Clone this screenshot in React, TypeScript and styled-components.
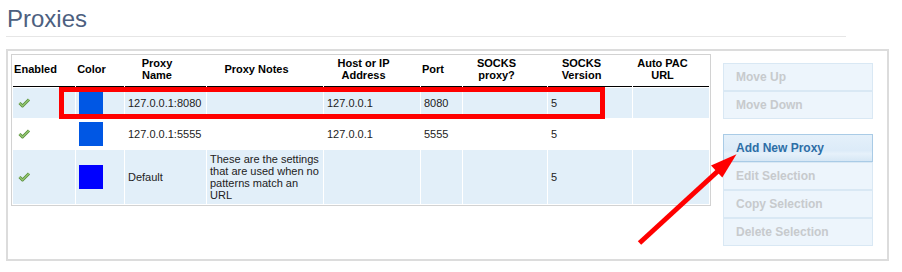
import React from "react";
import styled, { createGlobalStyle } from "styled-components";

const GlobalStyle = createGlobalStyle`
  body {
    margin: 0;
    background: #ffffff;
    font-family: "Liberation Sans", Arial, sans-serif;
  }
`;

const Page = styled.div`
  position: relative;
  padding-left: 6px;
`;

const Title = styled.h1`
  width: 840px;
  margin: 0 0 12px;
  padding: 5px 0 3px 1px;
  box-sizing: border-box;
  font-size: 24px;
  line-height: 28px;
  font-weight: normal;
  color: #4d5f80;
  border-bottom: 1px solid #e6e6e6;
`;

const Panel = styled.div`
  position: relative;
  display: flex;
  align-items: flex-start;
  width: 883px;
  height: 212px;
  box-sizing: border-box;
  padding: 3px;
  border: 2px solid #dcdcdc;
`;

const ProxyTable = styled.table`
  width: 700px;
  table-layout: fixed;
  border: 1px solid #d2d2d2;
  border-collapse: separate;
  border-spacing: 1px;
  font-size: 11px;
  line-height: 12px;
  color: #222;
`;

const HeadCell = styled.th<{ $w: number }>`
  width: ${(p) => p.$w}px;
  box-sizing: border-box;
  padding: 1px 17px 5px 0;
  text-align: center;
  vertical-align: middle;
  font-weight: bold;
  color: #000;
  border-bottom: 1px solid #000;
`;

const Row = styled.tr<{ $shaded?: boolean }>`
  background: ${(p) => (p.$shaded ? "#e2eff9" : "#ffffff")};
`;

const Cell = styled.td`
  padding: 3px;
  vertical-align: middle;
  text-align: left;
  overflow: hidden;
`;

const Swatch = styled.div<{ $color: string }>`
  width: 24px;
  height: 24px;
  background: ${(p) => p.$color};
`;

const Tick = styled.svg`
  display: block;
  margin-left: 2px;
`;

const ButtonColumn = styled.div`
  display: flex;
  flex-direction: column;
  gap: 15px;
  width: 150px;
  margin: 9px 0 0 12px;
`;

const ButtonGroup = styled.div`
  display: flex;
  flex-direction: column;
`;

const ActionButton = styled.button<{ $enabled?: boolean }>`
  display: flex;
  align-items: center;
  height: 28px;
  box-sizing: border-box;
  padding: 0 12px;
  margin: 0;
  font-family: "Liberation Sans", Arial, sans-serif;
  font-size: 12px;
  font-weight: bold;
  text-align: left;
  border: 1px solid ${(p) => (p.$enabled ? "#a9cbe6" : "#d9e8f4")};
  background: ${(p) =>
    p.$enabled
      ? "linear-gradient(to bottom, #e4f0fa 0%, #dcebf8 60%, #e6f1fa 72%, #d6e7f5 100%)"
      : "#edf5fc"};
  color: ${(p) => (p.$enabled ? "#2d6ea6" : "#c7cacd")};
`;

const Highlight = styled.div`
  position: absolute;
  left: 51px;
  top: 36px;
  width: 546px;
  height: 32px;
  box-sizing: border-box;
  border: 5px solid #ff0000;
  pointer-events: none;
`;

const Arrow = styled.svg`
  position: absolute;
  left: 630px;
  top: 145px;
  pointer-events: none;
`;

const CheckIcon = () => (
  <Tick width="13" height="10" viewBox="0 0 13 10">
    <polyline points="1.5,5 4.5,8 11,1.5" fill="none" stroke="#5b8f3d" strokeWidth="3" strokeLinejoin="round" />
    <polyline points="1.5,5 4.5,8 11,1.5" fill="none" stroke="#95c873" strokeWidth="1.2" strokeLinejoin="round" />
  </Tick>
);

const columns: [React.ReactNode, number][] = [
  ["Enabled", 62],
  ["Color", 48],
  [<>Proxy<br />Name</>, 81],
  ["Proxy Notes", 116],
  [<>Host or IP<br />Address</>, 96],
  ["Port", 41],
  [<>SOCKS<br />proxy?</>, 84],
  [<>SOCKS<br />Version</>, 84],
  [<>Auto PAC<br />URL</>, 76],
];

const proxies = [
  { color: "#0057e4", name: "127.0.0.1:8080", notes: "", host: "127.0.0.1", port: "8080", version: "5" },
  { color: "#0057e4", name: "127.0.0.1:5555", notes: "", host: "127.0.0.1", port: "5555", version: "5" },
  {
    color: "#0000ff",
    name: "Default",
    notes: "These are the settings that are used when no patterns match an URL",
    host: "",
    port: "",
    version: "5",
  },
];

export default function App() {
  return (
    <>
      <GlobalStyle />
      <Page>
        <Title>Proxies</Title>
        <Panel>
          <ProxyTable>
            <thead>
              <tr>
                {columns.map(([label, w], i) => (
                  <HeadCell key={i} $w={w}>
                    {label}
                  </HeadCell>
                ))}
              </tr>
            </thead>
            <tbody>
              {proxies.map((p, i) => (
                <Row key={i} $shaded={i % 2 === 0}>
                  <Cell>
                    <CheckIcon />
                  </Cell>
                  <Cell>
                    <Swatch $color={p.color} />
                  </Cell>
                  <Cell>{p.name}</Cell>
                  <Cell>{p.notes}</Cell>
                  <Cell>{p.host}</Cell>
                  <Cell>{p.port}</Cell>
                  <Cell></Cell>
                  <Cell>{p.version}</Cell>
                  <Cell></Cell>
                </Row>
              ))}
            </tbody>
          </ProxyTable>
          <ButtonColumn>
            <ButtonGroup>
              <ActionButton>Move Up</ActionButton>
              <ActionButton>Move Down</ActionButton>
            </ButtonGroup>
            <ButtonGroup>
              <ActionButton $enabled>Add New Proxy</ActionButton>
              <ActionButton>Edit Selection</ActionButton>
              <ActionButton>Copy Selection</ActionButton>
              <ActionButton>Delete Selection</ActionButton>
            </ButtonGroup>
          </ButtonColumn>
          <Highlight />
        </Panel>
        <Arrow width="115" height="105" viewBox="0 0 115 105">
          <line x1="9.5" y1="98" x2="88" y2="26" stroke="#ff0000" strokeWidth="5" />
          <polygon points="106.5,9.3 81,20.5 92.3,32.5" fill="#ff0000" />
        </Arrow>
      </Page>
    </>
  );
}
